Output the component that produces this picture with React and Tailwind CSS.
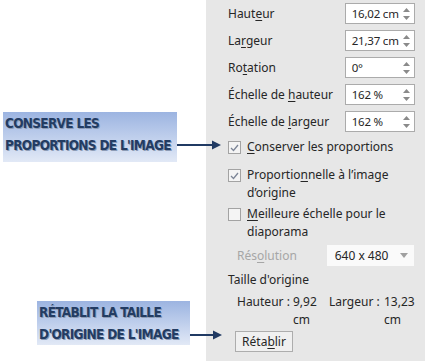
import React from 'react'

const navy = '#203a63'

function Arrow({ width }) {
  return (
    <svg width={width} height="12" viewBox={`0 0 ${width} 12`} className="block shrink-0">
      <line x1="0" y1="6" x2={width - 6} y2="6" stroke={navy} strokeWidth="2" />
      <polygon points={`${width - 9},1.5 ${width},6 ${width - 9},10.5`} fill={navy} />
    </svg>
  )
}

function Callout({ lines, className }) {
  return (
    <div
      className={`flex flex-col bg-gradient-to-b from-[#9cb4e1] to-[#e2e9f6] px-[2px] ${className}`}
      style={{ fontFamily: '"DejaVu Sans Condensed", "Liberation Sans", sans-serif' }}
    >
      {lines.map(l => (
        <div
          key={l}
          className="whitespace-nowrap text-[13.5px] font-bold leading-[22px] tracking-[-0.7px] text-[#233c63] [text-shadow:1px_1px_0_#8c9bb5]"
        >
          {l}
        </div>
      ))}
    </div>
  )
}

function U({ children }) {
  return <span className="underline underline-offset-2">{children}</span>
}

function Spin({ value }) {
  return (
    <div className="flex h-[21px] w-[70px] items-center justify-between border border-[#ababab] bg-white pl-[6px] pr-[4px]">
      <span className="text-[11.5px] tracking-[-0.2px]">{value}</span>
      <div className="flex flex-col gap-[4px]">
        <svg width="7" height="4" viewBox="0 0 7 4"><polygon points="0,4 3.5,0 7,4" fill="#8a8a8a" /></svg>
        <svg width="7" height="4" viewBox="0 0 7 4"><polygon points="0,0 3.5,4 7,0" fill="#8a8a8a" /></svg>
      </div>
    </div>
  )
}

function Row({ label, value }) {
  return (
    <div className="flex h-[27px] items-center justify-between">
      <span>{label}</span>
      <Spin value={value} />
    </div>
  )
}

function Check({ checked, className, children }) {
  return (
    <div className={`flex items-start gap-[6px] ${className}`}>
      <div className="mt-[3px] flex h-[13px] w-[13px] shrink-0 items-center justify-center border border-[#a3a3a3] bg-[#f4f4f4]">
        {checked && (
          <svg width="9" height="8" viewBox="0 0 9 8">
            <polyline points="1,4 3.5,6.5 8,1" fill="none" stroke="#7c8597" strokeWidth="1.3" />
          </svg>
        )}
      </div>
      <div className="leading-[18px]">{children}</div>
    </div>
  )
}

export default function App() {
  return (
    <div
      className="flex h-[361px] w-[425px] overflow-hidden bg-white text-[12px] text-[#262626]"
      style={{ fontFamily: '"Noto Sans", "Open Sans", sans-serif' }}
    >
      <div className="relative z-10 w-[206px] shrink-0">
        <div className="mt-[112px] ml-[3px] flex items-center">
          <Callout className="h-[50px] w-[174px]" lines={['CONSERVE LES', "PROPORTIONS DE L'IMAGE"]} />
          <div className="mt-[16px] -mr-[44px]">
            <Arrow width={44} />
          </div>
        </div>
        <div className="mt-[139px] ml-[37px] flex items-center">
          <Callout className="h-[44px] w-[153px]" lines={['RÉTABLIT LA TAILLE', "D'ORIGINE DE L'IMAGE"]} />
          <div className="mt-[24px] -mr-[32px]">
            <Arrow width={32} />
          </div>
        </div>
      </div>

      <div className="flex-1 bg-[#e7e7e7] pl-[22px] pr-[12px]">
        <Row label={<>Haut<U>e</U>ur</>} value="16,02 cm" />
        <Row label={<>La<U>r</U>geur</>} value="21,37 cm" />
        <Row label={<>Ro<U>t</U>ation</>} value="0°" />
        <Row label={<>Échelle de <U>h</U>auteur</>} value="162 %" />
        <Row label={<>Échelle de <U>l</U>argeur</>} value="162 %" />

        <Check checked className="mt-[3px]"><U>C</U>onserver les proportions</Check>
        <Check checked className="mt-[10px]">Proportio<U>n</U>nelle à l’image<br />d’origine</Check>
        <Check className="mt-[3px]"><U>M</U>eilleure échelle pour le<br />diaporama</Check>

        <div className="mt-[4px] flex h-[21px] items-center justify-between">
          <span className="pl-[9px] text-[#a6a6a6]">Rés<U>o</U>lution</span>
          <div className="mr-[1px] flex h-[21px] w-[87px] items-center justify-between bg-[#fafafa] pl-[8px] pr-[6px]">
            <span>640 x 480</span>
            <svg width="8" height="5" viewBox="0 0 8 5"><polygon points="0,0 4,5 8,0" fill="#a0a0a0" /></svg>
          </div>
        </div>

        <div className="mt-[5px] leading-[18px]">Taille d'origine</div>
        <div className="mt-[4px] grid grid-cols-[56px_36px_55px_auto] pl-[9px] leading-[18px]">
          <span>Hauteur :</span>
          <span>9,92<br />cm</span>
          <span>Largeur :</span>
          <span>13,23<br />cm</span>
        </div>

        <button className="mt-[2px] ml-[7px] h-[21px] w-[58px] border border-[#adadad] bg-[#f0f0f0]">
          Réta<U>b</U>lir
        </button>
      </div>
    </div>
  )
}
